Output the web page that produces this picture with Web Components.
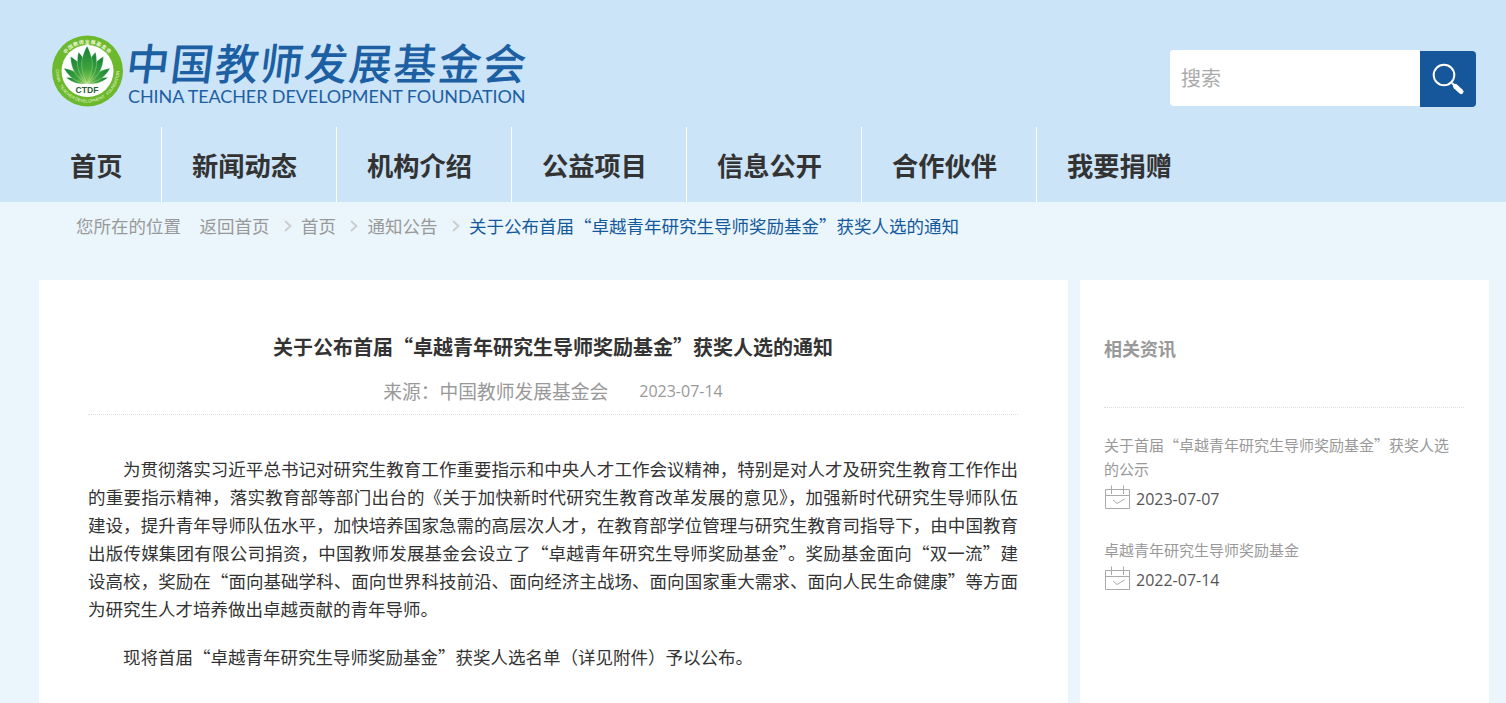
<!DOCTYPE html>
<html lang="zh-CN">
<head>
<meta charset="utf-8">
<title>关于公布首届“卓越青年研究生导师奖励基金”获奖人选的通知</title>
<style>
  html, body { margin: 0; height: 100%; overflow: hidden; }
  body {
    display: flex;
    flex-direction: column;
    background: #ebf5fc;
    font-family: "Noto Sans CJK SC", "Open Sans", sans-serif;
    color: #333;
  }
</style>
</head>
<body>
  <site-header>
    <site-logo slot="logo"></site-logo>
    <search-box slot="search"></search-box>
    <main-nav slot="nav">
      <a>首页</a><a>新闻动态</a><a>机构介绍</a><a>公益项目</a><a>信息公开</a><a>合作伙伴</a><a>我要捐赠</a>
    </main-nav>
  </site-header>
  <bread-crumb current="关于公布首届“卓越青年研究生导师奖励基金”获奖人选的通知">
    <span>返回首页</span><span>首页</span><span>通知公告</span>
  </bread-crumb>
  <page-columns>
    <article-card heading="关于公布首届“卓越青年研究生导师奖励基金”获奖人选的通知" source="来源：中国教师发展基金会" date="2023-07-14">
      <p>为贯彻落实习近平总书记对研究生教育工作重要指示和中央人才工作会议精神，特别是对人才及研究生教育工作作出的重要指示精神，落实教育部等部门出台的《关于加快新时代研究生教育改革发展的意见》，加强新时代研究生导师队伍建设，提升青年导师队伍水平，加快培养国家急需的高层次人才，在教育部学位管理与研究生教育司指导下，由中国教育出版传媒集团有限公司捐资，中国教师发展基金会设立了“卓越青年研究生导师奖励基金”。奖励基金面向“双一流”建设高校，奖励在“面向基础学科、面向世界科技前沿、面向经济主战场、面向国家重大需求、面向人民生命健康”等方面为研究生人才培养做出卓越贡献的青年导师。</p>
      <p>现将首届“卓越青年研究生导师奖励基金”获奖人选名单（详见附件）予以公布。</p>
    </article-card>
    <side-panel heading="相关资讯">
      <news-item date="2023-07-07">关于首届“卓越青年研究生导师奖励基金”获奖人选的公示</news-item>
      <news-item date="2022-07-14">卓越青年研究生导师奖励基金</news-item>
    </side-panel>
  </page-columns>

<script>
// small helper, every element below just sets its shadow html once
function shadow(el, html) {
  el.attachShadow({ mode: 'open' }).innerHTML = html;
}

class SiteHeader extends HTMLElement {
  connectedCallback() {
    if (this.shadowRoot) return;
    shadow(this, `
      <style>
        :host { display: block; background: #cce4f8; height: 202px; flex: none; }
        .top { display: flex; justify-content: space-between; align-items: flex-start; height: 127px; padding-left: 52px; padding-right: 30px; box-sizing: border-box; }
      </style>
      <div class="top"><slot name="logo"></slot><slot name="search"></slot></div>
      <slot name="nav"></slot>
    `);
  }
}

class SiteLogo extends HTMLElement {
  connectedCallback() {
    if (this.shadowRoot) return;
    // fan of leaves, outer ones first so the middle sits on top
    const leaves = [
      [-73, 22, 3], [73, 22, 3], [-56, 28, 4.5], [56, 28, 4.5], [-31, 32, 6], [31, 32, 6],
      [-15, 33, 6], [15, 33, 6], [0, 38, 7]
    ].map(([a, l, w]) =>
      `<path transform="rotate(${a} 35 49)" d="M35 49 C${35 - w * .7} ${49 - l * .3} ${35 - w * 1.3} ${49 - l * .55} 35 ${49 - l} C${35 + w * 1.3} ${49 - l * .55} ${35 + w * .7} ${49 - l * .3} 35 49Z" fill="url(#leaf)" stroke="#fff" stroke-width=".25"/>`
    ).join('');

    // the english ring goes word by word along the bottom of the circle
    const r = 31.5;
    const at = deg => {
      const a = deg * Math.PI / 180;
      return `${(35.5 - r * Math.sin(a)).toFixed(2)} ${(36 + r * Math.cos(a)).toFixed(2)}`;
    };
    const ring = [['CHINA', 81], ['TEACHER', 44], ['DEVELOPMENT', -5], ['FOUNDATION', -65]];
    const ringPaths = ring.map(([w, c], i) => {
      const half = w.length * 2.8 + 2;
      return `<path id="w${i}" d="M${at(c + half)} A${r} ${r} 0 0 0 ${at(c - half)}"/>`;
    }).join('');
    const ringWords = ring.map(([w], i) =>
      `<text font-size="4.2" fill="#eaf6d8" font-family="Liberation Sans, sans-serif"><textPath href="#w${i}" startOffset="50%" text-anchor="middle">${w}</textPath></text>`
    ).join('');

    shadow(this, `
      <style>
        :host { display: flex; align-items: flex-start; padding-top: 35px; color: #1d5fa3; }
        svg { flex: none; display: block; width: 72px; height: 72px; }
        .words { margin-left: 4px; }
        .cn { font: 500 43px/46px "Noto Sans CJK SC", sans-serif; letter-spacing: 1.6px; white-space: nowrap; transform: skewX(-7deg); margin-top: 3px; transform-origin: left bottom; height: 46px; margin-left: -4px; }
        .en { font: 400 18px/20px Lato, "Liberation Sans", sans-serif; white-space: nowrap; margin-top: 2px; letter-spacing: -.09px; }
      </style>
      <svg viewBox="0 0 72 72">
        <defs>
          <linearGradient id="leaf" x1="0" y1="0" x2="0" y2="1">
            <stop offset="0" stop-color="#14803a"/>
            <stop offset=".6" stop-color="#3fa43a"/>
            <stop offset="1" stop-color="#9ad25a"/>
          </linearGradient>
          <path id="top" d="M8 36 A27.5 27.5 0 0 1 63 36"/>
          ${ringPaths}
        </defs>
        <circle cx="35.5" cy="36" r="35.5" fill="#6cb92d"/>
        <circle cx="35.5" cy="36" r="26" fill="#fff"/>
        <text font-size="5" font-weight="700" fill="#eaf6d8" font-family="Noto Sans CJK SC, sans-serif" letter-spacing=".6"><textPath href="#top" startOffset="50%" text-anchor="middle">中国教师发展基金会</textPath></text>
        ${ringWords}
        ${leaves}
        <text x="35" y="57.5" text-anchor="middle" font-size="8.6" font-weight="700" fill="#2a5d35" font-family="Liberation Sans, sans-serif">CTDF</text>
      </svg>
      <div class="words">
        <div class="cn">中国教师发展基金会</div>
        <div class="en">CHINA TEACHER DEVELOPMENT FOUNDATION</div>
      </div>
    `);
  }
}

class SearchBox extends HTMLElement {
  connectedCallback() {
    if (this.shadowRoot) return;
    shadow(this, `
      <style>
        :host { display: flex; align-items: flex-start; margin-top: 50px; }
        .field { width: 250px; height: 56px; box-sizing: border-box; padding-left: 11px; background: #fff; border-radius: 4px 0 0 4px; color: #aaa; font: 20px/56px "Noto Sans CJK SC", sans-serif; }
        button { width: 56px; height: 56px; margin-top: 1px; padding: 0; border: 0; background: #16579b; border-radius: 0 4px 4px 0; display: flex; align-items: center; justify-content: center; }
        svg { width: 36px; height: 36px; display: block; }
      </style>
      <div class="field">搜索</div>
      <button type="button" aria-label="搜索">
        <svg viewBox="0 0 36 36" fill="none" stroke="#fff">
          <circle cx="14" cy="14" r="10.3" stroke-width="2"/>
          <path d="M22 22 L25 25" stroke-width="2"/>
          <path d="M25.5 25.5 L31 30.5" stroke-width="5" stroke-linecap="round"/>
        </svg>
      </button>
    `);
  }
}

class MainNav extends HTMLElement {
  connectedCallback() {
    if (this.shadowRoot) return;
    shadow(this, `
      <style>
        :host { display: flex; height: 75px; padding-left: 40px; }
        ::slotted(a) {
          display: block;
          box-sizing: border-box;
          width: 175px;
          padding-left: 30px;
          border-right: 1px solid #fff;
          font: 700 26.25px/76px "Noto Sans CJK SC", sans-serif;
          color: #333;
          white-space: nowrap;
        }
        ::slotted(a:first-child) { width: 122px; }
        ::slotted(a:last-child) { border-right: 0; }
      </style>
      <slot></slot>
    `);
  }
}

class BreadCrumb extends HTMLElement {
  connectedCallback() {
    if (this.shadowRoot) return;
    // a chevron goes in front of every link but the first
    const links = [...this.querySelectorAll('span')].map(s => s.textContent);
    const chevron = '<svg viewBox="0 0 8 12" fill="none" stroke="#ccc" stroke-width="1.8"><path d="M1 1 L6.5 6 L1 11"/></svg>';
    const row = links.map((t, i) => (i ? chevron : '') + `<span>${t}</span>`).join('');
    shadow(this, `
      <style>
        :host { display: flex; align-items: center; flex: none; box-sizing: border-box; height: 50px; padding: 0 0 2px 76px; color: #999; font: 17.5px/48px "Noto Sans CJK SC", sans-serif; white-space: nowrap; }
        .here { margin-right: 18.5px; }
        svg { width: 8px; height: 12px; margin: 0 9.5px 0 14px; flex: none; }
        .current { color: #14599c; }
      </style>
      <span class="here">您所在的位置</span>
      ${row}
      ${chevron}
      <span class="current">${this.getAttribute('current')}</span>
    `);
  }
}

class PageColumns extends HTMLElement {
  connectedCallback() {
    if (this.shadowRoot) return;
    shadow(this, `
      <style>
        :host { display: flex; gap: 12px; flex: 1; min-height: 0; padding: 28px 17px 0 39px; }
      </style>
      <slot></slot>
    `);
  }
}

class ArticleCard extends HTMLElement {
  connectedCallback() {
    if (this.shadowRoot) return;
    shadow(this, `
      <style>
        :host { display: block; width: 1029px; flex: none; box-sizing: border-box; padding: 52px 50px 0 49px; background: #fff; overflow: hidden; }
        h1 { margin: 0; text-align: center; font: 700 20px/30px "Noto Sans CJK SC", sans-serif; color: #333; }
        .meta { display: flex; justify-content: center; align-items: center; gap: 31px; height: 37px; margin-top: 10px; border-bottom: 1px dotted #ddd; color: #999; font-size: 18.75px; padding-bottom: 5px; }
        .date { font: 16px "Open Sans", sans-serif; }
        .body { margin-top: 40px; }
        ::slotted(p) { margin: 0 0 20px; text-indent: 35px; font: 17.5px/28px "Noto Sans CJK SC", sans-serif; color: #333; text-align: justify; }
      </style>
      <h1>${this.getAttribute('heading')}</h1>
      <div class="meta"><span>${this.getAttribute('source')}</span><span class="date">${this.getAttribute('date')}</span></div>
      <div class="body"><slot></slot></div>
    `);
  }
}

class SidePanel extends HTMLElement {
  connectedCallback() {
    if (this.shadowRoot) return;
    shadow(this, `
      <style>
        :host { display: block; flex: 1; box-sizing: border-box; padding: 0 25px 0 24px; background: #fff; }
        h2 { margin: 0; padding-top: 53px; height: 74px; border-bottom: 1px dotted #ddd; font: 700 18px/30px "Noto Sans CJK SC", sans-serif; color: #999; }
        .list { padding-top: 25px; display: flex; flex-direction: column; gap: 24px; }
      </style>
      <h2>${this.getAttribute('heading')}</h2>
      <div class="list"><slot></slot></div>
    `);
  }
}

class NewsItem extends HTMLElement {
  connectedCallback() {
    if (this.shadowRoot) return;
    shadow(this, `
      <style>
        :host { display: block; padding-right: 2px; }
        .title { font: 15px/24px "Noto Sans CJK SC", sans-serif; color: #999; }
        .when { display: flex; align-items: center; gap: 6px; height: 30px; margin-top: 3px; font: 16px "Open Sans", sans-serif; color: #555; }
        svg { width: 25px; height: 25px; flex: none; margin: -3px 0 0 1px; }
      </style>
      <div class="title"><slot></slot></div>
      <div class="when">
        <svg viewBox="0 0 25 25" fill="none" stroke="#aaa" stroke-width="1">
          <path d="M.5 4.5 H24.5 V23.5 H.5Z M.5 10.5 H24.5 M6.5 .5 V9 M18.5 .5 V9"/>
          <path d="M8 15 L12 18.5 L19.5 14"/>
        </svg>
        <span>${this.getAttribute('date')}</span>
      </div>
    `);
  }
}

customElements.define('site-header', SiteHeader);
customElements.define('site-logo', SiteLogo);
customElements.define('search-box', SearchBox);
customElements.define('main-nav', MainNav);
customElements.define('bread-crumb', BreadCrumb);
customElements.define('page-columns', PageColumns);
customElements.define('article-card', ArticleCard);
customElements.define('side-panel', SidePanel);
customElements.define('news-item', NewsItem);
</script>
</body>
</html>
